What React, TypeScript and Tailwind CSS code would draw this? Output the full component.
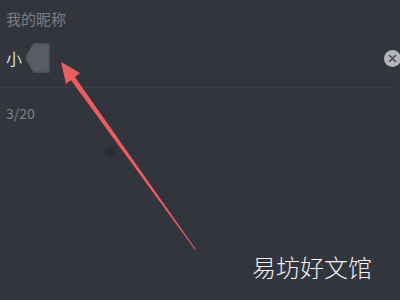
import React from 'react';

const font = { fontFamily: '"Noto Sans CJK SC", "Noto Sans", sans-serif' };

// Red annotation arrow laid over the page
const Arrow = () => (
  <svg className="absolute left-0 top-0" width="400" height="300" viewBox="0 0 400 300">
    <defs>
      <filter id="soft" x="-20%" y="-20%" width="140%" height="140%">
        <feGaussianBlur stdDeviation="0.6" />
      </filter>
    </defs>
    <g filter="url(#soft)" fill="#ee5b5f">
      <polygon points="61,62 80,73 66,84" />
      <polygon points="74.7,76.8 70.7,79.8 194.6,249.3 195.4,248.7" />
    </g>
  </svg>
);

export default function App() {
  return (
    <div className="relative w-[400px] h-[300px] overflow-hidden bg-[#33353d]" style={font}>
      <div className="flex flex-col">
        <div className="pl-[6px] pt-[10px] text-[15px] leading-[18px] text-[#7c7e86]">我的昵称</div>

        <div className="flex items-center h-[30px] mt-[15px] pl-[6px]">
          <span className="text-[16px] leading-none text-[#d8d9dc]">小</span>
          <div className="ml-[3px] h-[30px] w-[25px] bg-[#5a5c63] blur-[1.5px] [clip-path:polygon(35%_0,100%_0,100%_100%,35%_100%,0_50%)]" />
          <div className="flex-1" />
          <div className="mr-[-1px] flex h-[17px] w-[17px] items-center justify-center rounded-full bg-[#b4b5ba]">
            <svg width="9" height="9" viewBox="0 0 9 9">
              <path d="M1.5 1.5 L7.5 7.5 M7.5 1.5 L1.5 7.5" stroke="#4a4c53" strokeWidth="1.6" strokeLinecap="round" />
            </svg>
          </div>
        </div>

        <div className="mt-[14px] mr-[8px] h-px bg-[#3d3f47]" />

        <div className="pl-[6px] pt-[17px] text-[14px] leading-[16px] text-[#80828a]">3/20</div>

        <div className="flex justify-end pr-[28px] pt-[134px]">
          <span className="text-[24px] leading-none font-light text-[#f2f2f2]">易坊好文馆</span>
        </div>
      </div>

      <div className="absolute left-[105px] top-[147px] h-[10px] w-[10px] rounded-full bg-[#25262c] opacity-80 blur-[2px]" />
      <Arrow />
    </div>
  );
}
